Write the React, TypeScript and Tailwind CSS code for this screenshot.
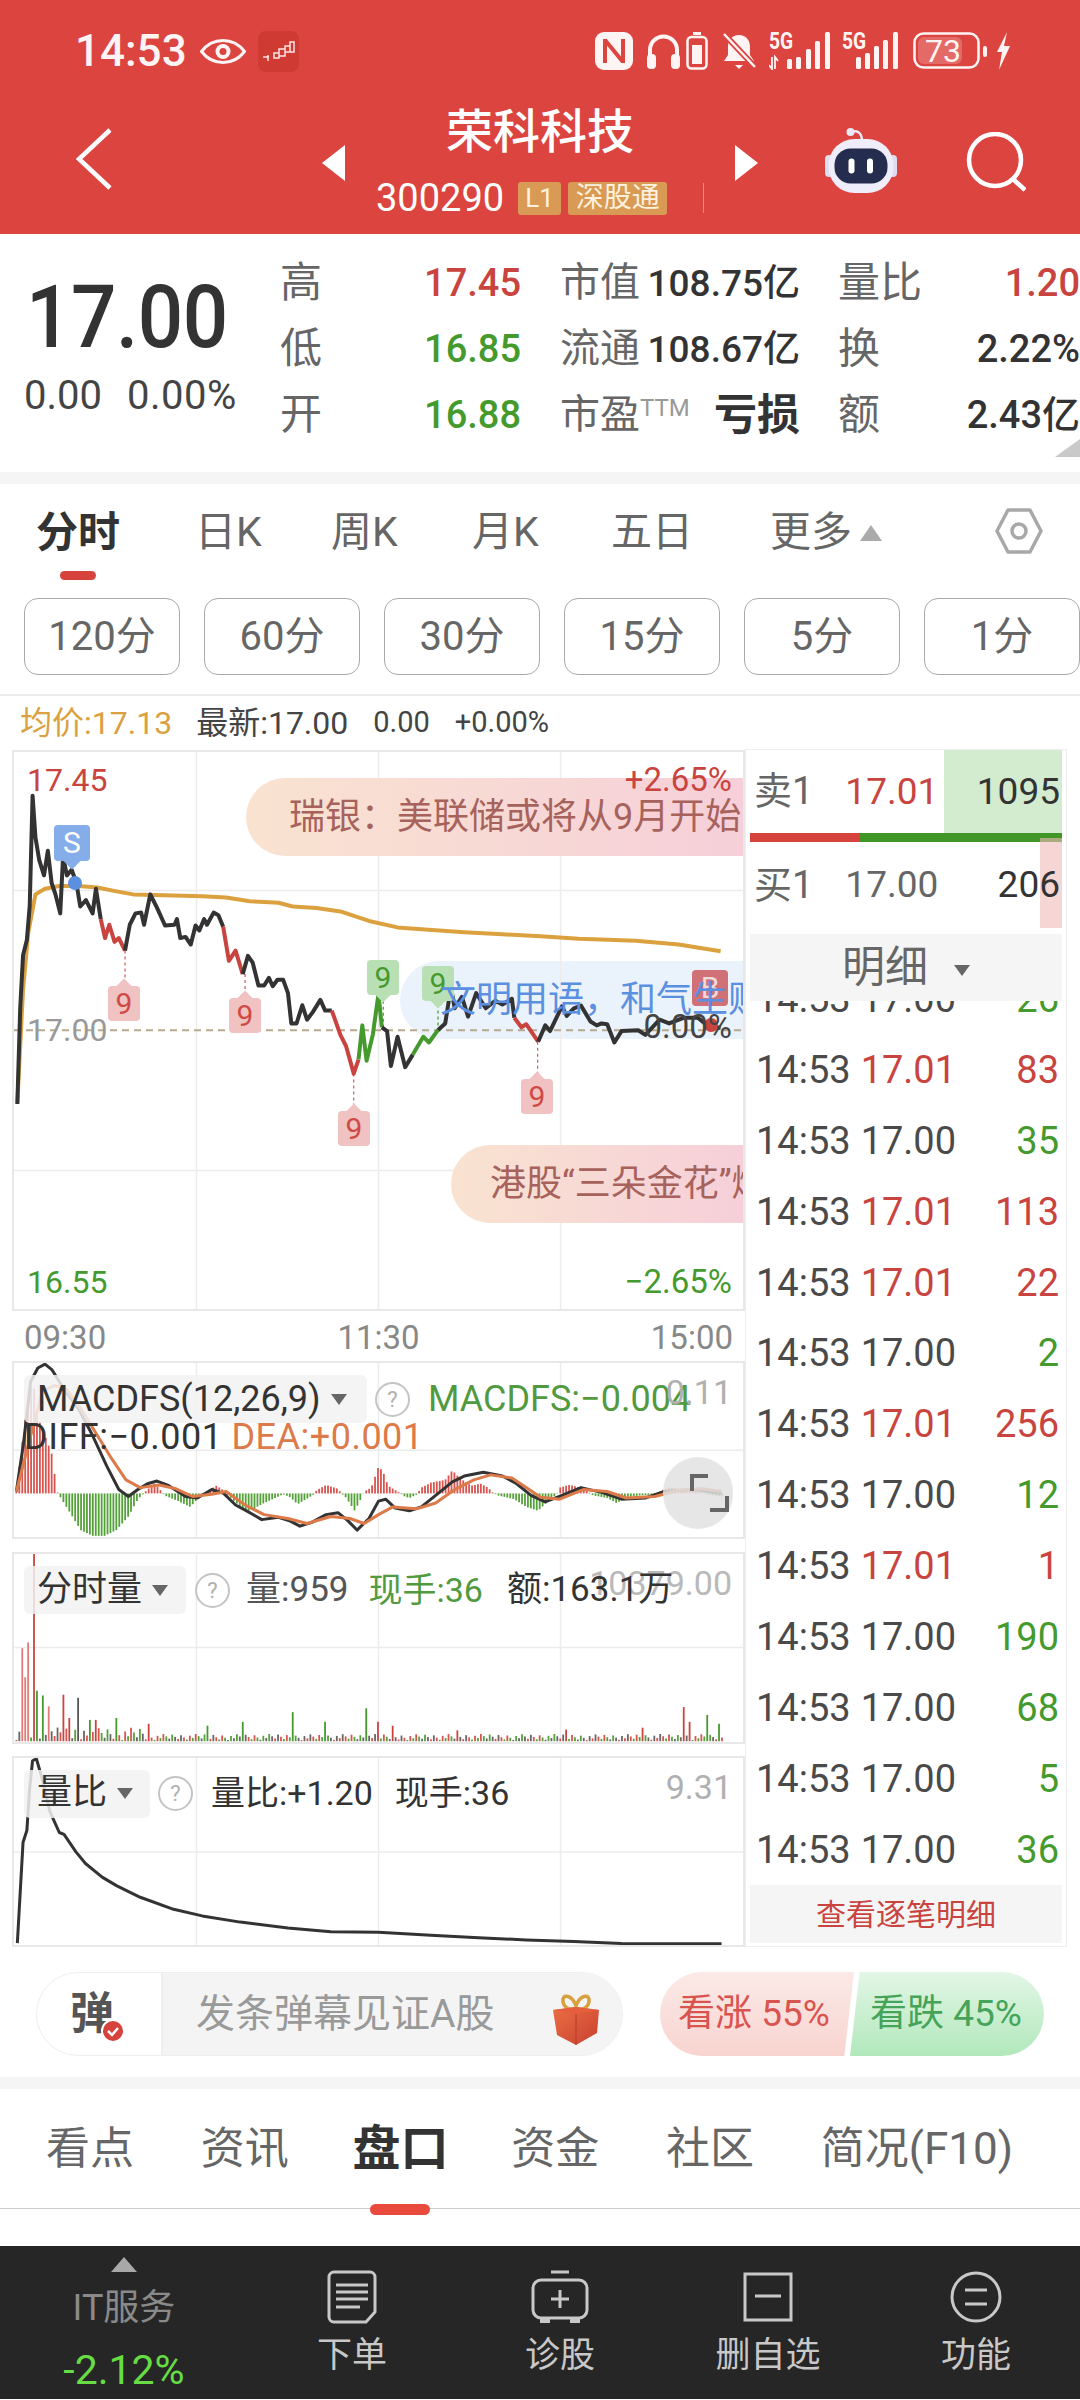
import type { ReactNode } from 'react'

type Pt = [number, number]

const RED = '#c9443f'
const GREEN = '#459a2e'

const toPath = (pts: Pt[]) => 'M' + pts.map(p => `${p[0]} ${p[1]}`).join('L')

// linear interpolation over an envelope of [x, value] pairs
function interp(env: Pt[], x: number) {
  for (let i = 1; i < env.length; i++) {
    if (x <= env[i][0]) {
      const [x0, y0] = env[i - 1]
      const [x1, y1] = env[i]
      return y0 + ((y1 - y0) * (x - x0)) / (x1 - x0)
    }
  }
  return env[env.length - 1][1]
}

const priceSegments: { color: string; pts: Pt[] }[] = [
  { color: '#333333', pts: [[32, 952], [38, 700], [44, 560], [52, 520], [58, 430], [64, 140], [70, 250], [78, 310], [88, 350], [96, 285], [104, 370], [112, 400], [122, 450], [128, 300], [136, 350], [146, 335], [156, 370], [164, 432], [176, 415], [190, 450], [197, 385], [207, 465]] },
  { color: RED, pts: [[207, 465], [216, 515], [225, 480], [236, 525], [245, 515], [258, 548]] },
  { color: '#333333', pts: [[258, 548], [268, 480], [280, 450], [292, 448], [298, 480], [311, 400], [325, 435], [342, 482], [362, 480], [367, 465], [374, 515], [385, 512], [396, 532], [406, 482], [414, 495], [424, 465], [430, 480], [444, 448], [454, 455], [464, 485]] },
  { color: RED, pts: [[464, 485], [476, 575], [490, 548], [505, 610]] },
  { color: '#333333', pts: [[505, 610], [516, 562], [526, 580], [538, 640], [550, 640], [560, 620], [568, 642], [578, 625], [590, 625], [600, 660], [607, 740], [618, 740], [630, 692], [640, 730], [652, 710], [668, 678], [678, 706], [692, 706]] },
  { color: RED, pts: [[692, 706], [710, 770], [722, 800], [738, 872], [748, 835]] },
  { color: GREEN, pts: [[748, 835], [756, 745], [765, 838], [778, 770], [790, 662], [797, 750]] },
  { color: '#333333', pts: [[797, 750], [808, 760], [816, 852], [830, 775], [846, 855], [862, 822]] },
  { color: GREEN, pts: [[862, 822], [884, 775], [896, 790], [915, 757]] },
  { color: '#333333', pts: [[915, 757], [930, 740], [942, 645], [950, 700], [965, 670], [978, 722], [995, 660], [1015, 700], [1035, 680], [1050, 690], [1070, 675], [1075, 725]] },
  { color: RED, pts: [[1075, 725], [1090, 750], [1100, 742], [1125, 788]] },
  { color: '#333333', pts: [[1125, 788], [1140, 745], [1150, 760], [1175, 695], [1185, 720], [1200, 700], [1215, 693], [1235, 735], [1248, 745], [1258, 740], [1270, 742], [1285, 790], [1300, 760], [1335, 758], [1350, 770], [1380, 730], [1400, 740], [1430, 725], [1460, 725], [1480, 745], [1508, 752]] },
]

const avgLine: Pt[] = [[32, 950], [44, 650], [55, 500], [70, 400], [90, 385], [120, 378], [160, 378], [200, 382], [240, 392], [275, 400], [340, 402], [420, 405], [470, 408], [520, 418], [580, 422], [610, 432], [660, 436], [710, 445], [770, 470], [830, 487], [880, 492], [970, 500], [1050, 505], [1130, 510], [1210, 517], [1330, 522], [1420, 532], [1508, 550]]

const macdEnv: Pt[] = [[30, 5], [42, 130], [55, 250], [65, 290], [75, 200], [90, 150], [105, 100], [115, 5], [120, -5], [140, -45], [165, -95], [190, -110], [215, -110], [240, -95], [265, -60], [285, -15], [295, -3], [305, 10], [320, 25], [335, 5], [340, -5], [370, -20], [395, -35], [410, -15], [425, -3], [430, 5], [450, 20], [465, 8], [475, -5], [500, -35], [520, -45], [550, -25], [580, -8], [590, -2], [605, -10], [620, -28], [645, -10], [655, -2], [660, 8], [680, 22], [705, 12], [712, 0], [720, -8], [740, -45], [755, -10], [760, 5], [775, 15], [790, 70], [800, 55], [810, 20], [830, 5], [845, -8], [855, -12], [870, -3], [880, 15], [900, 28], [930, 35], [945, 60], [960, 40], [985, 20], [1005, 25], [1020, 15], [1030, 2], [1040, -5], [1075, -15], [1100, -35], [1125, -45], [1150, -15], [1165, -2], [1170, 15], [1190, 22], [1215, 15], [1232, 3], [1240, -5], [1270, -12], [1290, -25], [1310, -10], [1340, -5], [1370, -3], [1385, 8], [1400, 15], [1450, 8], [1480, -3], [1510, -8]]

const diffLine: Pt[] = [[30, 385], [45, 260], [60, 100], [75, 65], [90, 55], [105, 70], [130, 120], [160, 170], [190, 240], [220, 320], [245, 380], [265, 398], [285, 380], [305, 365], [325, 358], [350, 370], [385, 398], [410, 402], [440, 380], [465, 390], [490, 420], [520, 440], [545, 458], [580, 452], [605, 462], [625, 475], [650, 465], [680, 445], [705, 440], [725, 460], [745, 485], [770, 455], [790, 410], [805, 405], [825, 428], [855, 435], [880, 425], [910, 395], [945, 360], [970, 345], [1010, 335], [1050, 345], [1080, 365], [1110, 395], [1140, 412], [1175, 395], [1215, 375], [1260, 388], [1300, 405], [1350, 402], [1390, 385], [1450, 380], [1510, 390]]

const deaLine: Pt[] = [[30, 385], [60, 240], [85, 125], [110, 110], [135, 120], [165, 170], [200, 240], [230, 300], [260, 355], [290, 375], [330, 368], [365, 378], [400, 398], [440, 392], [470, 385], [510, 420], [550, 445], [600, 455], [640, 468], [690, 450], [730, 455], [760, 468], [790, 445], [820, 425], [870, 430], [910, 415], [950, 380], [990, 355], [1025, 342], [1070, 350], [1100, 375], [1130, 400], [1170, 405], [1220, 380], [1270, 385], [1310, 402], [1370, 398], [1420, 382], [1470, 378], [1510, 385]]

const ratioLine: Pt[] = [[32, 1530], [44, 1270], [52, 1240], [58, 1130], [64, 1060], [72, 1055], [85, 1110], [100, 1190], [120, 1245], [130, 1250], [155, 1295], [175, 1325], [210, 1360], [240, 1382], [290, 1412], [360, 1443], [420, 1460], [500, 1476], [600, 1491], [690, 1501], [790, 1502], [900, 1510], [1000, 1516], [1100, 1522], [1200, 1526], [1300, 1531], [1510, 1532]]

// tall volume bars: x, height, colour
const volumePeaks: [number, number, string][] = [
  [40, 240, '#e37b78'], [46, 165, '#e37b78'], [52, 255, '#e37b78'], [65, 485, RED], [70, 215, GREEN], [76, 130, GREEN], [88, 118, GREEN], [95, 90, '#e37b78'], [127, 120, RED], [143, 60, RED], [158, 112, '#555555'], [183, 55, GREEN], [197, 55, RED], [240, 60, GREEN], [310, 45, RED], [430, 40, GREEN], [505, 50, GREEN], [607, 75, GREEN], [675, 50, GREEN], [765, 85, GREEN], [790, 50, RED], [820, 40, RED], [955, 28, RED], [1185, 30, RED], [1345, 35, RED], [1433, 88, RED], [1443, 50, RED], [1483, 68, GREEN], [1505, 45, GREEN],
]

const ticks = [
  { p: '17.00', up: false, q: '26' },
  { p: '17.01', up: true, q: '83' },
  { p: '17.00', up: false, q: '35' },
  { p: '17.01', up: true, q: '113' },
  { p: '17.01', up: true, q: '22' },
  { p: '17.00', up: false, q: '2' },
  { p: '17.01', up: true, q: '256' },
  { p: '17.00', up: false, q: '12' },
  { p: '17.01', up: true, q: '1' },
  { p: '17.00', up: false, q: '190' },
  { p: '17.00', up: false, q: '68' },
  { p: '17.00', up: false, q: '5' },
  { p: '17.00', up: false, q: '36' },
]

function ChartSvg({ box, rows, children }: { box: [number, number, number, number]; rows: number[]; children?: ReactNode }) {
  const [x, y, w, h] = box
  return (
    <svg viewBox={`${x} ${y} ${w} ${h}`} preserveAspectRatio="none" className="absolute inset-0 w-full h-full">
      {[408, 790, 1172].map(v => (
        <line key={v} x1={v} x2={v} y1={y} y2={y + h} stroke="#ececec" strokeWidth={1.5} vectorEffect="non-scaling-stroke" />
      ))}
      {rows.map(v => (
        <line key={v} x1={x} x2={x + w} y1={v} y2={v} stroke="#ececec" strokeWidth={1.5} vectorEffect="non-scaling-stroke" />
      ))}
      {children}
    </svg>
  )
}

function Line({ pts, color, width = 3 }: { pts: Pt[]; color: string; width?: number }) {
  return <path d={toPath(pts)} fill="none" stroke={color} strokeWidth={width} strokeLinejoin="round" vectorEffect="non-scaling-stroke" />
}

function Caret({ className = '' }: { className?: string }) {
  return <span className={`inline-block w-0 h-0 border-x-[8px] border-x-transparent border-t-[11px] border-t-[#666666] ${className}`} />
}

function Help() {
  return (
    <span className="flex items-center justify-center w-[35px] h-[35px] rounded-full border-2 border-[#c4c4c4] text-[22px] text-[#b0b0b0] shrink-0">?</span>
  )
}

function Flag9({ pos, tone }: { pos: string; tone: 'red' | 'green' }) {
  const red = tone === 'red'
  return (
    <div className={`absolute ${pos} w-[32px] h-[40px]`}>
      <div className={`absolute left-[10px] w-[12px] h-[12px] rotate-45 ${red ? 'top-0 bg-[#f0c2c1]' : 'bottom-0 bg-[#b9e0b5]'}`} />
      <div className={`absolute inset-x-0 h-[35px] rounded-[4px] flex items-center justify-center text-[30px] leading-none ${red ? 'bottom-0 bg-[#f0c2c1] text-[#cf4a46]' : 'top-0 bg-[#b9e0b5] text-[#459a2e]'}`}>9</div>
    </div>
  )
}

function FiveG() {
  return <text transform="scale(0.8 1)" x="0" y="17" fontSize="24" fontWeight="700" fill="#fff4f4" fontFamily="Roboto, sans-serif">5G</text>
}

function StatusIcons() {
  return (
    <div className="flex items-center">
      {/* NFC */}
      <svg width="38" height="38" viewBox="0 0 38 38">
        <rect width="38" height="38" rx="9" fill="#fff4f4" />
        <path d="M10 7v24M10 8l18 22M28 7v24" fill="none" stroke="#dc4440" strokeWidth="4" />
      </svg>
      {/* headset */}
      <svg className="ml-[14px]" width="33" height="36" viewBox="0 0 33 36">
        <path d="M3 27V17a13.500 13.500 0 0 1 27 0v10" fill="none" stroke="#fff4f4" strokeWidth="4" />
        <rect x="0" y="21" width="9" height="15" rx="4" fill="#fff4f4" />
        <rect x="24" y="21" width="9" height="15" rx="4" fill="#fff4f4" />
      </svg>
      {/* earbud case battery */}
      <svg className="ml-[6px]" width="22" height="38" viewBox="0 0 22 38">
        <rect x="7" y="0" width="8" height="3" fill="#fff4f4" />
        <rect x="1.500" y="5" width="19" height="31.500" rx="4" fill="none" stroke="#fff4f4" strokeWidth="2.500" />
        <rect x="6" y="13" width="10" height="19" fill="#fff4f4" />
      </svg>
      {/* muted bell */}
      <svg className="ml-[14px]" width="35" height="39" viewBox="0 0 35 39">
        <path d="M17 3c7 0 11 5 11 12v8l4 6H2l4-6v-8C6 8 10 3 17 3z" fill="#fff4f4" />
        <path d="M13 33h8l-4 4z" fill="#fff4f4" />
        <path d="M2 2l31 33" stroke="#dc4440" strokeWidth="6" />
        <path d="M2 2l31 33" stroke="#fff4f4" strokeWidth="2.500" />
      </svg>
      {/* SIM 1 */}
      <svg className="ml-[12px]" width="61" height="38" viewBox="0 0 61 38">
        <FiveG />
        <path d="M3 25v12l-3-4M6 37V25l3 4" fill="none" stroke="#fff4f4" strokeWidth="1.800" />
        <rect x="18" y="27" width="5" height="10" rx="1.500" fill="#fff4f4" />
        <rect x="27" y="25" width="5" height="12" rx="1.500" fill="#fff4f4" />
        <rect x="37" y="17" width="5" height="20" rx="1.500" fill="#fff4f4" />
        <rect x="46" y="9" width="5" height="28" rx="1.500" fill="#fff4f4" />
        <rect x="56" y="0" width="5" height="37" rx="1.500" fill="#fff4f4" />
      </svg>
      {/* SIM 2 */}
      <svg className="ml-[12px]" width="56" height="38" viewBox="0 0 56 38">
        <FiveG />
        <rect x="14" y="25" width="5" height="12" rx="1.500" fill="#fff4f4" />
        <rect x="23" y="21" width="5" height="16" rx="1.500" fill="#fff4f4" />
        <rect x="32" y="14" width="5" height="23" rx="1.500" fill="#fff4f4" />
        <rect x="41" y="8" width="5" height="29" rx="1.500" fill="#fff4f4" />
        <rect x="51" y="0" width="5" height="37" rx="1.500" fill="#fff4f4" />
      </svg>
      {/* battery */}
      <svg className="ml-[15px]" width="75" height="38" viewBox="0 0 75 38">
        <rect x="1.500" y="1.500" width="64" height="34" rx="9" fill="none" stroke="#fff4f4" strokeWidth="2.500" />
        <rect x="5" y="5" width="44" height="27" rx="6" fill="#e36a67" />
        <rect x="70" y="14" width="4" height="11" rx="2" fill="#fff4f4" />
        <text x="12" y="30" fontSize="32" fill="#fff4f4" fontFamily="Roboto, sans-serif">73</text>
      </svg>
      <svg className="ml-[8px]" width="15" height="38" viewBox="0 0 15 38">
        <path d="M11 0L1 20h5l-3 18L14 14H8z" fill="#fff4f4" />
      </svg>
    </div>
  )
}

function Robot() {
  return (
    <svg width="72" height="66" viewBox="0 0 72 66">
      <path d="M26 5Q36 2 37 13" fill="none" stroke="#ece9f6" strokeWidth="2.500" />
      <circle cx="25.500" cy="5" r="4" fill="#ece9f6" />
      <rect x="0" y="28" width="8" height="22" rx="4" fill="#dfdcf0" />
      <rect x="64" y="28" width="8" height="22" rx="4" fill="#dfdcf0" />
      <rect x="3.500" y="12" width="65" height="54" rx="26" fill="#efedf9" />
      <rect x="9.500" y="21.500" width="53" height="35" rx="16" fill="#252d4e" />
      <rect x="23.500" y="31.500" width="6" height="15" rx="3" fill="#ffffff" />
      <rect x="42" y="31.500" width="6" height="15" rx="3" fill="#ffffff" />
    </svg>
  )
}

function Gift() {
  return (
    <svg width="48" height="52" viewBox="0 0 48 52">
      <defs>
        <linearGradient id="giftBox" x1="0" y1="0" x2="1" y2="1">
          <stop offset="0" stopColor="#ea6f45" />
          <stop offset="1" stopColor="#c9402f" />
        </linearGradient>
      </defs>
      <path d="M24 16C18 18 10 14 11 6 13 0 21 4 24 13 27 4 35 0 37 6 38 14 30 18 24 16z" fill="none" stroke="#d9a040" strokeWidth="3.500" />
      <path d="M1 17l23-3 23 3-2 23-21 12-19-10z" fill="url(#giftBox)" />
      <path d="M1 17l23 4 23-4-23-3z" fill="#e65f3c" />
      <path d="M24 21v31" stroke="#b23a28" strokeWidth="1" />
    </svg>
  )
}

function StockTab({ label, className = '' }: { label: string; className?: string }) {
  return <span className={`text-[41px] leading-none text-[#666666] ${className}`}>{label}</span>
}

function QuoteRow({ label, value, valueCls, mid, midValue, last, lastValue, lastCls }: {
  label: string; value: string; valueCls: string; mid: ReactNode; midValue: ReactNode; last: string; lastValue: string; lastCls: string
}) {
  return (
    <div className="grid grid-cols-[241px_279px_280px] h-[66px] items-center whitespace-nowrap">
      <div className="flex items-center justify-between">
        <span className="text-[42px] leading-none text-[#666666]">{label}</span>
        <span className={`text-[38px] font-medium leading-none ${valueCls}`}>{value}</span>
      </div>
      <div className="flex items-center justify-between pl-[39px]">
        {mid}
        {midValue}
      </div>
      <div className="flex items-center justify-between pl-[38px]">
        <span className="text-[42px] leading-none text-[#666666]">{last}</span>
        <span className={`text-[38px] font-medium leading-none ${lastCls}`}>{lastValue}</span>
      </div>
    </div>
  )
}

function MainChart() {
  return (
    <div className="relative h-[561px] border-2 border-[#e8e8e8] overflow-hidden">
      {/* the blue pill sits under the price line, its caption stays above */}
      <div className="absolute left-[386px] right-0 top-[209px] h-[78px] rounded-l-full bg-[#eaf2fb]" />
      <ChartSvg box={[25, 25, 1530, 1467]} rows={[390, 1127]}>
        <line x1={25} x2={1555} y1={758} y2={758} stroke="#b7a98f" strokeWidth={2} strokeDasharray="7 5" vectorEffect="non-scaling-stroke" />
        {[[258, 548, 640], [510, 610, 670], [738, 872, 965], [1124, 788, 880]].map(([x, a, b]) => (
          <line key={x} x1={x} x2={x} y1={a} y2={b} stroke="#d45a56" strokeWidth={1.2} strokeDasharray="3 3" vectorEffect="non-scaling-stroke" />
        ))}
        {[[800, 680, 760], [915, 690, 757]].map(([x, a, b]) => (
          <line key={x} x1={x} x2={x} y1={a} y2={b} stroke="#459a2e" strokeWidth={1.2} strokeDasharray="3 3" vectorEffect="non-scaling-stroke" />
        ))}
        <Line pts={avgLine} color="#dca13f" width={4} />
        {priceSegments.map((s, i) => (
          <Line key={i} pts={s.pts} color={s.color} width={4} />
        ))}
      </ChartSvg>

      <span className="absolute left-[54px] top-[124px] w-[14px] h-[14px] rounded-full bg-[#5b8fe0]" />
      <span className="absolute left-[690px] top-[266px] w-[14px] h-[14px] rounded-full bg-[#c9443f]" />

      <div className="absolute left-[40px] top-[73px] w-[36px] h-[36px] rounded-[4px] bg-[#84ade9] flex items-center justify-center text-[30px] leading-none text-white">S</div>
      <div className="absolute left-[52px] top-[103px] w-[12px] h-[12px] rotate-45 bg-[#84ade9]" />
      <Flag9 pos="left-[94px] top-[229px]" tone="red" />
      <Flag9 pos="left-[215px] top-[241px]" tone="red" />
      <Flag9 pos="left-[324px] top-[354px]" tone="red" />
      <Flag9 pos="left-[507px] top-[322px]" tone="red" />
      <Flag9 pos="left-[353px] top-[208px]" tone="green" />
      <Flag9 pos="left-[408px] top-[214px]" tone="green" />
      <div className="absolute left-[678px] top-[218px] w-[36px] h-[36px] rounded-[4px] bg-[#cf7177] flex items-center justify-center text-[30px] leading-none text-[#f0d9d9]">B</div>

      {/* scrolling danmaku pills */}
      <div className="absolute left-[232px] right-0 top-[26px] h-[78px] rounded-l-full bg-linear-to-r from-[#f9e3d0] to-[#f6cfd9] pl-[43px] flex items-center text-[36px] text-[#a7625b] whitespace-nowrap overflow-hidden">瑞银：美联储或将从9月开始降息</div>
      <div className="absolute left-[386px] right-0 top-[209px] h-[78px] pl-[40px] flex items-center text-[36px] text-[#5b8fe0] whitespace-nowrap overflow-hidden">文明用语，和气生财</div>
      <div className="absolute left-[437px] right-0 top-[393px] h-[78px] rounded-l-full bg-linear-to-r from-[#f9e3d0] to-[#f6cfd9] pl-[39px] flex items-center text-[36px] text-[#a7625b] whitespace-nowrap overflow-hidden">港股“三朵金花”爆发</div>

      <span className="absolute left-[13px] top-[8px] text-[32px] leading-[40px] text-[#c9443f]">17.45</span>
      <span className="absolute right-[11px] top-[8px] text-[33px] leading-[40px] text-[#c9443f]">+2.65%</span>
      <span className="absolute left-[13px] top-[258px] text-[32px] leading-[40px] text-[#999999]">17.00</span>
      <span className="absolute right-[11px] top-[255px] text-[33px] leading-[40px] text-[#444444]">0.00%</span>
      <span className="absolute left-[13px] top-[510px] text-[32px] leading-[40px] text-[#459a2e]">16.55</span>
      <span className="absolute right-[11px] top-[510px] text-[33px] leading-[40px] text-[#459a2e]">−2.65%</span>
    </div>
  )
}

function MacdChart() {
  const bars = Array.from({ length: 241 }, (_, i) => {
    const x = 30 + i * 6.17
    return { x, v: interp(macdEnv, x) }
  })
  return (
    <div className="relative h-[178px] border-2 border-[#e8e8e8] overflow-hidden">
      <ChartSvg box={[25, 52, 1530, 451]} rows={[278]}>
        {bars.map(b => (
          <line key={b.x} x1={b.x} x2={b.x} y1={390} y2={390 - b.v} stroke={b.v > 0 ? '#d9544f' : '#54a13a'} strokeWidth={1.8} vectorEffect="non-scaling-stroke" />
        ))}
        <Line pts={diffLine} color="#333333" />
        <Line pts={deaLine} color="#dd7a4a" />
      </ChartSvg>
      <div className="absolute left-[10px] top-[9px] flex items-center whitespace-nowrap">
        <div className="flex items-center h-[48px] w-[343px] pl-[13px] rounded-[6px] bg-[#f2f2f2]/85 text-[36px] text-[#333333]">
          MACDFS(12,26,9)
          <Caret className="ml-[10px]" />
        </div>
        <span className="ml-[8px]"><Help /></span>
        <span className="ml-[18px] text-[36px] text-[#529a3f]">MACDFS:−0.004</span>
      </div>
      <span className="absolute right-[11px] top-[9px] text-[34px] leading-[40px] text-[#b0b0b0]">0.11</span>
      <div className="absolute left-[10px] top-[52px] flex items-center text-[36px] leading-[44px] whitespace-nowrap tracking-[0.5px]">
        <span className="text-[#333333]">DIFF:−0.001</span>
        <span className="ml-[9px] text-[#dd7a4a]">DEA:+0.001</span>
      </div>
      <div className="absolute left-[649px] top-[94px] w-[70px] h-[72px] rounded-full bg-[#e2e2e2]/85">
        <svg width="70" height="72" viewBox="0 0 70 72">
          <path d="M45 19H29v15M47 53h17V39" fill="none" stroke="#666666" strokeWidth="4" />
        </svg>
      </div>
    </div>
  )
}

function VolumeChart() {
  const bars = Array.from({ length: 241 }, (_, i) => {
    const x = 30 + i * 6.17
    const seed = (i * 7919) % 97
    const decay = x < 300 ? 34 : 16
    const peak = volumePeaks.find(p => Math.abs(p[0] - x) <= 3.08)
    const h = peak ? peak[1] : 3 + (seed / 97) * decay
    const color = peak ? peak[2] : seed % 3 === 0 ? '#d9544f' : seed % 3 === 1 ? '#54a13a' : '#666666'
    return { x, h, color }
  })
  return (
    <div className="relative h-[192px] border-2 border-[#e8e8e8] overflow-hidden">
      <ChartSvg box={[25, 537, 1530, 485]} rows={[778]}>
        {bars.map(b => (
          <line key={b.x} x1={b.x} x2={b.x} y1={1020} y2={1020 - b.h} stroke={b.color} strokeWidth={1.8} vectorEffect="non-scaling-stroke" />
        ))}
      </ChartSvg>
      <span className="absolute right-[11px] top-[9px] text-[34px] leading-[40px] text-[#b9b9b9]">10379.00</span>
      <div className="absolute left-[10px] top-[10px] flex items-center whitespace-nowrap">
        <div className="flex items-center h-[48px] w-[162px] pl-[13px] rounded-[6px] bg-[#f2f2f2]/85 text-[35px] text-[#333333]">
          分时量
          <Caret className="ml-[10px]" />
        </div>
        <span className="ml-[9px]"><Help /></span>
        <span className="ml-[16px] text-[35px] text-[#555555]">量:959</span>
        <span className="ml-[20px] text-[34px] text-[#529a3f]">现手:36</span>
        <span className="ml-[24px] text-[35px] text-[#333333]">额:163.1万</span>
      </div>
    </div>
  )
}

function RatioChart() {
  return (
    <div className="relative h-[191px] border-2 border-[#e8e8e8] overflow-hidden">
      <ChartSvg box={[25, 1053, 1530, 482]} rows={[1295]}>
        <Line pts={ratioLine} color="#333333" />
      </ChartSvg>
      <span className="absolute right-[11px] top-[9px] text-[34px] leading-[40px] text-[#b0b0b0]">9.31</span>
      <div className="absolute left-[10px] top-[10px] flex items-center whitespace-nowrap">
        <div className="flex items-center h-[48px] w-[126px] pl-[13px] rounded-[6px] bg-[#f2f2f2]/85 text-[35px] text-[#333333]">
          量比
          <Caret className="ml-[10px]" />
        </div>
        <span className="ml-[8px]"><Help /></span>
        <span className="ml-[18px] text-[34px] text-[#333333]">量比:+1.20</span>
        <span className="ml-[22px] text-[34px] text-[#333333]">现手:36</span>
      </div>
    </div>
  )
}

function TradePanel() {
  return (
    <div className="w-[322px] h-[1198px] mt-[-1px] border border-[#eeeeee] px-[4px] flex flex-col shrink-0">
      <div className="relative h-[83px] flex items-center">
        <div className="absolute right-0 inset-y-0 w-[118px] bg-[#d3ebcf]" />
        <span className="relative ml-[4px] text-[38px] text-[#666666]">卖1</span>
        <span className="relative ml-[32px] text-[37px] text-[#c9443f]">17.01</span>
        <span className="relative ml-auto mr-[2px] text-[37px] text-[#333333]">1095</span>
      </div>
      <div className="flex h-[9px] shrink-0">
        <div className="w-[110px] bg-[#d6423c]" />
        <div className="flex-1 bg-[#419628]" />
      </div>
      <div className="relative h-[86px] flex items-center">
        <div className="absolute right-0 top-[-4px] bottom-0 w-[22px] bg-[#f0b9b9]/60" />
        <span className="relative ml-[4px] text-[38px] text-[#666666]">买1</span>
        <span className="relative ml-[32px] text-[37px] text-[#666666]">17.00</span>
        <span className="relative ml-auto mr-[2px] text-[37px] text-[#333333]">206</span>
      </div>
      <div className="mt-[6px] h-[67px] shrink-0 bg-[#f5f5f5] flex items-center justify-center text-[43px] text-[#666666]">
        明细
        <Caret className="ml-[26px] mt-[6px]" />
      </div>
      <div className="h-[884px] overflow-hidden">
        <div className="-mt-[37px]">
          {ticks.map((t, i) => (
            <div key={i} className="flex items-center h-[70.900px] text-[38px] whitespace-nowrap">
              <span className="ml-[6px] text-[#4a4a4a]">14:53</span>
              <span className={`ml-[10px] ${t.up ? 'text-[#c9443f]' : 'text-[#4a4a4a]'}`}>{t.p}</span>
              <span className={`ml-auto mr-[3px] ${t.up ? 'text-[#c9443f]' : 'text-[#459a2e]'}`}>{t.q}</span>
            </div>
          ))}
        </div>
      </div>
      <div className="h-[58px] shrink-0 bg-[#f5f5f5] flex items-center justify-center text-[30px] text-[#c9443f]">查看逐笔明细</div>
    </div>
  )
}

function BarIcon({ name }: { name: 'order' | 'diag' | 'remove' | 'menu' }) {
  const s = { fill: 'none', stroke: '#c8c8c8', strokeWidth: 3 }
  if (name === 'order') {
    return (
      <svg width="50" height="54" viewBox="0 0 50 54">
        <path d="M7 2h36a5 5 0 0 1 5 5v35l-9 10H7a5 5 0 0 1-5-5V7a5 5 0 0 1 5-5z" {...s} />
        <path d="M9 15h32M9 22h32M9 29h32M9 37h24" {...s} />
      </svg>
    )
  }
  if (name === 'diag') {
    return (
      <svg width="58" height="54" viewBox="0 0 58 54">
        <path d="M20 2h18" {...s} />
        <rect x="2" y="10" width="54" height="38" rx="8" {...s} />
        <path d="M29 20v18M20 29h18" {...s} />
        <path d="M9 49h10v4H9zM39 49h10v4H39z" fill="#c8c8c8" />
      </svg>
    )
  }
  if (name === 'remove') {
    return (
      <svg width="50" height="50" viewBox="0 0 50 50">
        <rect x="2" y="2" width="46" height="46" {...s} />
        <path d="M12 24h26" {...s} />
      </svg>
    )
  }
  return (
    <svg width="52" height="52" viewBox="0 0 52 52">
      <circle cx="26" cy="26" r="24" {...s} />
      <path d="M15 19h22M15 33h22" {...s} />
    </svg>
  )
}

export default function App() {
  return (
    <div className="w-[1080px] h-[2400px] overflow-hidden bg-white text-[#333333] [font-family:Roboto,'Noto_Sans_CJK_SC',sans-serif]">
      {/* top bar */}
      <header className="h-[234px] bg-[#dc4440] text-white">
        <div className="h-[102px] flex items-center justify-between pl-[75px] pr-[69px]">
          <div className="flex items-center">
            <span className="text-[44px] font-medium leading-none text-[#fff4f4]">14:53</span>
            <svg className="ml-[13px]" width="46" height="25" viewBox="0 0 46 25">
              <path d="M1.500 12.500C8 4 15 1.500 23 1.500S38 4 44.500 12.500C38 21 31 23.500 23 23.500S8 21 1.500 12.500z" fill="none" stroke="#fff4f4" strokeWidth="3" />
              <circle cx="23" cy="12.500" r="7.500" fill="#fff4f4" />
              <circle cx="23" cy="12.500" r="3.500" fill="#dc4440" />
            </svg>
            <svg className="ml-[12px]" width="41" height="41" viewBox="0 0 41 41">
              <rect width="41" height="41" rx="8" fill="#cf3a33" />
              <path d="M5 26h6M10 24v6M16 22h5v5h-5zM21 18h6v7h-6zM27 15h5v6h-5zM32 11h4v10h-4z" stroke="#ffe4e2" strokeWidth="1.500" fill="none" />
            </svg>
          </div>
          <StatusIcons />
        </div>

        <div className="flex items-start pl-[76px]">
          <svg className="mt-[26px] shrink-0" width="36" height="62" viewBox="0 0 36 62">
            <path d="M34 2L3 31l31 29" fill="none" stroke="#ffffff" strokeWidth="4.500" />
          </svg>
          <span className="ml-[210px] mt-[43px] w-0 h-0 border-y-[18px] border-y-transparent border-r-[23px] border-r-white shrink-0" />
          <div className="w-[390px] shrink-0 flex flex-col items-center pt-[7px]">
            <div className="text-[47px] font-medium leading-[46px] whitespace-nowrap">荣科科技</div>
            <div className="mt-[26px] h-[34px] flex items-center self-start ml-[31px] whitespace-nowrap">
              <span className="text-[38px] leading-none">300290</span>
              <span className="ml-[14px] w-[43px] h-[33px] rounded-[3px] bg-[#d89a54] flex items-center justify-center text-[26px] leading-none text-[#fff1de]">L1</span>
              <span className="ml-[7px] w-[99px] h-[33px] rounded-[3px] bg-[#d89a54] flex items-center justify-center text-[28px] leading-none text-[#fff1de]">深股通</span>
              <span className="ml-[36px] w-px h-[30px] bg-[#e88a82]" />
            </div>
          </div>
          <span className="mt-[43px] w-0 h-0 border-y-[18px] border-y-transparent border-l-[23px] border-l-white shrink-0" />
          <div className="ml-[67px] mt-[25px] shrink-0"><Robot /></div>
          <svg className="ml-[69px] mt-[30px] shrink-0" width="60" height="60" viewBox="0 0 60 60">
            <circle cx="29" cy="28" r="26" fill="none" stroke="#ffffff" strokeWidth="4.500" />
            <path d="M47 47l12 11" stroke="#ffffff" strokeWidth="4.500" />
          </svg>
        </div>
      </header>

      {/* quote summary */}
      <section className="relative h-[238px] flex pt-[16px] overflow-hidden">
        <div className="w-[280px] shrink-0 pl-[24px] pt-[23px]">
          <div className="text-[80px] font-medium leading-[90px] tracking-[-0.5px] pl-[2px] origin-left scale-y-[1.08]">17.00</div>
          <div className="mt-[11px] text-[40px] leading-[44px] whitespace-nowrap text-[#444444]">0.00<span className="ml-[25px] tracking-[0.5px]">0.00%</span></div>
        </div>
        <div>
          <QuoteRow
            label="高" value="17.45" valueCls="text-[#c9443f]"
            mid={<span className="text-[40px] leading-none text-[#666666]">市值</span>}
            midValue={<span className="text-[37px] font-medium leading-none text-[#333333]">108.75亿</span>}
            last="量比" lastValue="1.20" lastCls="text-[#c9443f]"
          />
          <QuoteRow
            label="低" value="16.85" valueCls="text-[#459a2e]"
            mid={<span className="text-[40px] leading-none text-[#666666]">流通</span>}
            midValue={<span className="text-[37px] font-medium leading-none text-[#333333]">108.67亿</span>}
            last="换" lastValue="2.22%" lastCls="text-[#333333]"
          />
          <QuoteRow
            label="开" value="16.88" valueCls="text-[#459a2e]"
            mid={<span className="text-[40px] leading-none text-[#666666]">市盈<sup className="text-[24px] text-[#999999]">TTM</sup></span>}
            midValue={<span className="text-[43px] font-bold leading-none text-[#333333]">亏损</span>}
            last="额" lastValue="2.43亿" lastCls="text-[#333333]"
          />
        </div>
        <span className="absolute right-0 bottom-[15px] w-0 h-0 border-b-[18px] border-b-[#c9c9c9] border-l-[25px] border-l-transparent" />
      </section>

      <div className="h-[12px] bg-[#f5f5f5]" />

      {/* period tabs */}
      <nav className="h-[114px] relative flex pl-[36px] pt-[28px] whitespace-nowrap">
        <div className="relative w-[159px] shrink-0">
          <span className="text-[42px] font-bold leading-none text-[#333333]">分时</span>
          <span className="absolute left-[24px] top-[59px] w-[36px] h-[9px] rounded-full bg-[#d6423c]" />
        </div>
        <StockTab label="日K" className="w-[136px]" />
        <StockTab label="周K" className="w-[141px]" />
        <StockTab label="月K" className="w-[139px]" />
        <StockTab label="五日" className="w-[159px]" />
        <StockTab label="更多" />
        <span className="ml-[8px] mt-[13px] w-0 h-0 border-x-[11px] border-x-transparent border-b-[16px] border-b-[#aaaaaa]" />
        <svg className="ml-[113px] -mt-[4px]" width="48" height="46" viewBox="0 0 48 46">
          <path d="M13 2h22l11 21-11 21H13L2 23z" fill="none" stroke="#a8a8a8" strokeWidth="3.500" strokeLinejoin="round" />
          <circle cx="24" cy="23" r="7" fill="none" stroke="#a8a8a8" strokeWidth="3.500" />
        </svg>
      </nav>
      <div className="flex gap-[24px] pl-[24px]">
        {['120分', '60分', '30分', '15分', '5分', '1分'].map(label => (
          <div key={label} className="w-[156px] h-[77px] rounded-[14px] border border-[#a9a9a9] flex items-center justify-center text-[40px] text-[#666666]">{label}</div>
        ))}
      </div>
      <div className="mt-[19px] h-[2px] bg-[#ececec]" />

      {/* latest price legend */}
      <div className="h-[54px] flex items-center pl-[20px] text-[32px] whitespace-nowrap text-[#444444]">
        <span className="text-[#d9a13f]">均价:17.13</span>
        <span className="ml-[24px]">最新:17.00</span>
        <span className="ml-[25px] text-[29px]">0.00</span>
        <span className="ml-[25px] text-[29px]">+0.00%</span>
      </div>

      {/* charts and order book */}
      <div className="flex pl-[12px]">
        <div className="w-[733px] shrink-0 flex flex-col">
          <MainChart />
          <div className="h-[50px] flex items-center justify-between px-[12px] pt-[3px] text-[33px] text-[#888888]">
            <span>09:30</span>
            <span>11:30</span>
            <span>15:00</span>
          </div>
          <MacdChart />
          <div className="h-[13px]" />
          <VolumeChart />
          <div className="h-[12px]" />
          <RatioChart />
        </div>
        <TradePanel />
      </div>

      {/* danmaku input and sentiment */}
      <div className="mt-[25px] flex pl-[36px]">
        <div className="w-[587px] h-[84px] rounded-full border border-[#eeeeee] flex overflow-hidden shrink-0">
          <div className="relative w-[124px] shrink-0 pl-[33px] flex items-center text-[44px] font-bold text-[#555555]">
            弹
            <span className="absolute left-[64px] top-[46px] w-[24px] h-[24px] rounded-full bg-[#d6423c] border-2 border-white flex items-center justify-center">
              <svg width="14" height="14" viewBox="0 0 14 14"><path d="M2 7l4 4 6-7" fill="none" stroke="#ffffff" strokeWidth="2.500" /></svg>
            </span>
          </div>
          <div className="flex-1 bg-[#f4f4f4] border-l-2 border-[#eeeeee] flex items-center pl-[33px] text-[39px] text-[#999999] whitespace-nowrap">
            发条弹幕见证A股
            <span className="ml-auto mr-[22px] mt-[10px]"><Gift /></span>
          </div>
        </div>
        <div className="ml-[37px] flex h-[84px] w-[384px] text-[37px] whitespace-nowrap">
          <div className="w-[194px] rounded-l-full bg-linear-to-b from-[#fbeae7] to-[#f8d4d0] text-[#d9534f] pl-[18px] flex items-center [clip-path:polygon(0_0,100%_0,95%_100%,0_100%)]">看涨 55%</div>
          <div className="w-[194px] -ml-[4px] rounded-r-full bg-linear-to-b from-[#e2f6e6] to-[#b1e8bb] text-[#45a35a] pl-[20px] flex items-center [clip-path:polygon(5%_0,100%_0,100%_100%,0_100%)]">看跌 45%</div>
        </div>
      </div>

      <div className="mt-[21px] h-[12px] bg-[#f5f5f5]" />

      {/* detail tabs */}
      <div className="h-[120px] flex items-center justify-between pl-[46px] pr-[67px] border-b border-[#cccccc] whitespace-nowrap text-[44px] text-[#666666]">
        <span>看点</span>
        <span>资讯</span>
        <span className="relative -ml-[3px] text-[48px] font-bold text-[#333333]">
          盘口
          <span className="absolute left-[17px] bottom-[-30px] w-[60px] h-[11px] rounded-full bg-[#e84b3e]" />
        </span>
        <span className="-ml-[4px]">资金</span>
        <span>社区</span>
        <span>简况(F10)</span>
      </div>

      <div className="h-[37px]" />

      {/* bottom toolbar */}
      <footer className="h-[153px] bg-[#262626] flex">
        <div className="w-[248px] shrink-0 flex flex-col items-center pt-[11px]">
          <span className="w-0 h-0 border-x-[13px] border-x-transparent border-b-[15px] border-b-[#a8a8a8]" />
          <span className="mt-[14px] text-[36px] leading-[44px] text-[#8a8a8a]">IT服务</span>
          <span className="mt-[18px] text-[41px] leading-[44px] text-[#66dd44]">-2.12%</span>
        </div>
        {([
          { icon: 'order', label: '下单' },
          { icon: 'diag', label: '诊股' },
          { icon: 'remove', label: '删自选' },
          { icon: 'menu', label: '功能' },
        ] as const).map(item => (
          <div key={item.label} className="w-[208px] shrink-0 flex flex-col items-center pt-[24px]">
            <div className="h-[54px] flex items-center"><BarIcon name={item.icon} /></div>
            <span className="mt-[10px] text-[35px] leading-[44px] text-[#c8c8c8]">{item.label}</span>
          </div>
        ))}
      </footer>
    </div>
  )
}
